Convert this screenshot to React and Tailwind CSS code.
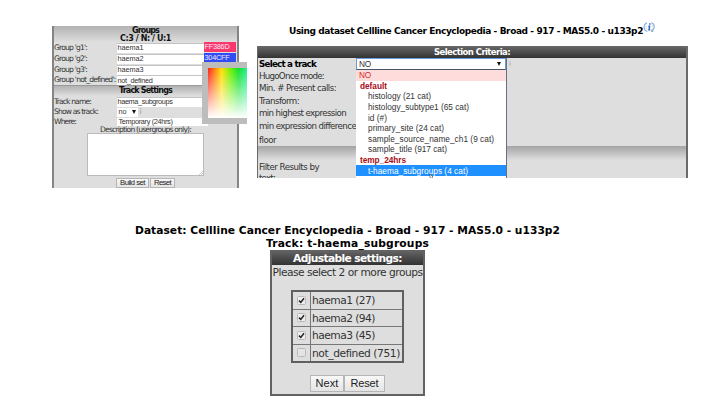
import { useLayoutEffect, useRef } from "react";

const SANS = "font-['DejaVu_Sans',sans-serif]";
const ARIAL = "font-['Liberation_Sans',sans-serif]";

// A single line of text whose tracking is adjusted to fill the given width.
function Fit({ w, className = "", children }) {
  const ref = useRef(null);
  useLayoutEffect(() => {
    const el = ref.current;
    el.style.letterSpacing = "0px";
    const natural = el.getBoundingClientRect().width;
    el.style.letterSpacing = (w - natural) / el.textContent.length + "px";
  }, [w, children]);
  return (
    <span ref={ref} className={`inline-block shrink-0 whitespace-nowrap ${className}`}>
      {children}
    </span>
  );
}

function Field({ label, lw, value, vw, h }) {
  return (
    <div className={`flex items-center ${h}`}>
      <div className="w-[62.5px] shrink-0 flex items-center">
        <Fit w={lw}>{label}</Fit>
      </div>
      <div className={`h-[10px] w-[87px] bg-white border-t border-[#c4c4c4] pl-px flex items-center text-[7.3px] ${ARIAL}`}>
        <Fit w={vw}>{value}</Fit>
      </div>
    </div>
  );
}

function Button({ className, w, children }) {
  return (
    <div className={`flex items-center justify-center border border-[#b5b5b5] bg-linear-to-b from-[#f8f8f8] to-[#e4e4e4] text-[#222] ${ARIAL} ${className}`}>
      <Fit w={w}>{children}</Fit>
    </div>
  );
}

function ColorPicker() {
  return (
    <div className="absolute left-[148px] top-[36px] w-[45px] h-[62px] bg-[#bdbdbd] pl-[6px] pt-[6px]">
      <div className="w-[39px] h-[50px] bg-[linear-gradient(to_right,#ff2018_0%,#ffe000_35%,#62f000_60%,#10df28_78%,#22ee96_100%)]">
        <div className="w-full h-full bg-linear-to-b from-transparent to-white" />
      </div>
    </div>
  );
}

function GroupsPanel() {
  return (
    <section className={`relative w-[187px] h-[162px] bg-[#dedede] border-x-2 border-[#858585] text-[7.6px] leading-[10px] text-[#333] ${SANS}`}>
      <header className="h-[16px] pt-px flex flex-col items-center bg-linear-to-b from-[#b2b2b2] to-[#dedede] font-bold text-[8px] leading-[7.5px] text-[#111]">
        <Fit w={27}>Groups</Fit>
        <Fit w={51}>C:3 / N: / U:1</Fit>
      </header>
      <div className="flex">
        <div>
          <Field h="h-[11px]" label="Group 'g1':" lw={33} value="haema1" vw={26} />
          <Field h="h-[11px]" label="Group 'g2':" lw={33} value="haema2" vw={26} />
          <Field h="h-[11px]" label="Group 'g3':" lw={33} value="haema3" vw={26} />
          <Field h="h-[10px]" label="Group 'not_defined':" lw={61.5} value="not_defined" vw={35} />
        </div>
        <div className={`w-[32px] text-[7.3px] text-[#f4e8f4] ${ARIAL}`}>
          <div className="h-[10px] bg-[#fb386d] pl-px flex items-center"><Fit w={25}>FF386D</Fit></div>
          <div className="h-[10px] mt-px bg-[#304cf4] pl-px flex items-center"><Fit w={25}>304CFF</Fit></div>
        </div>
      </div>
      <header className="h-[11px] flex items-center justify-center border-t border-[#999] bg-linear-to-b from-[#b2b2b2] to-[#dedede] font-bold text-[8px] text-[#111]">
        <Fit w={53}>Track Settings</Fit>
      </header>
      <Field h="h-[11px]" label="Track name:" lw={37} value="haema_subgroups" vw={55} />
      <div className="h-[10px] flex items-center">
        <div className="w-[62.5px] flex items-center"><Fit w={44}>Show as track:</Fit></div>
        <div className={`w-[21px] h-[9px] bg-white pl-[2px] flex items-center gap-[5px] text-[7.3px] text-[#333] ${ARIAL}`}>
          <Fit w={8}>no</Fit>
          <svg className="w-[4px] h-[4px]" viewBox="0 0 4 4"><path d="M0 0h4L2 4z" fill="#111" /></svg>
        </div>
        <span className="ml-[2px] text-[#999]">i</span>
      </div>
      <div className="h-[9px] flex items-center">
        <div className="w-[62.5px] flex items-center"><Fit w={22}>Where:</Fit></div>
        <div className={`w-[91px] h-[8px] bg-white pl-[2px] flex items-center text-[7.3px] ${ARIAL}`}><Fit w={54}>Temporary (24hrs)</Fit></div>
      </div>
      <div className="h-[7px] flex items-center justify-center">
        <Fit w={91}>Description (usergroups only):</Fit>
      </div>
      <div className="ml-[33px] w-[117px] h-[43px] bg-white border border-[#bbb] flex items-end justify-end">
        <svg className="w-[4px] h-[4px]" viewBox="0 0 4 4"><path d="M0 4L4 0M2 4L4 2" stroke="#aaa" strokeWidth=".6" /></svg>
      </div>
      <div className="mt-[2px] pl-[62px] flex gap-px text-[7.7px]">
        <Button className="w-[33px] h-[10px]" w={25}>Build set</Button>
        <Button className="w-[25px] h-[10px]" w={17}>Reset</Button>
      </div>
      <ColorPicker />
    </section>
  );
}

const options = [
  ["histology (21 cat)", 63],
  ["histology_subtype1 (65 cat)", 101],
  ["id (#)", 19],
  ["primary_site (24 cat)", 76],
  ["sample_source_name_ch1 (9 cat)", 126],
  ["sample_title (917 cat)", 79],
];

function TrackDropdown() {
  return (
    <div className={`absolute left-[98px] top-[12px] w-[151px] h-[120px] overflow-hidden bg-white border-r border-[#667080] text-[8.3px] text-[#333] ${ARIAL}`}>
      <div className="h-[12px] border-t border-l border-r border-[#6d9be0] border-b border-b-[#456] pl-[2px] pr-[4px] flex items-center justify-between">
        <Fit w={12}>NO</Fit>
        <svg className="w-[4px] h-[4px]" viewBox="0 0 4 4"><path d="M0 0h4L2 4z" fill="#111" /></svg>
      </div>
      <div className="h-[10.6px] bg-[#ffdcdc] pl-[3px] flex items-center text-[#d92a2a]"><Fit w={12}>NO</Fit></div>
      <div className="h-[10.6px] pl-[4px] flex items-center font-bold text-[#a80d14]"><Fit w={27}>default</Fit></div>
      {options.map(([name, w]) => (
        <div key={name} className="h-[10.6px] pl-[12px] flex items-center"><Fit w={w}>{name}</Fit></div>
      ))}
      <div className="h-[10.6px] pl-[4px] flex items-center font-bold text-[#a80d14]"><Fit w={46}>temp_24hrs</Fit></div>
      <div className="h-[10.6px] pl-[12px] flex items-center bg-[#1e90ff] text-white"><Fit w={100}>t-haema_subgroups (4 cat)</Fit></div>
      <div className="h-[10.6px] pl-[4px] flex items-center font-bold text-[#333]"><Fit w={34}>group_7</Fit></div>
      <svg className="absolute left-[73px] top-[116px] w-[5px] h-[5px]" viewBox="0 0 5 5"><path d="M1 0v5l3-2z" fill="#fff" stroke="#333" strokeWidth=".6" /></svg>
    </div>
  );
}

function CriteriaPanel() {
  return (
    <section className={`relative w-[431px] h-[132px] overflow-hidden bg-[#dedede] border-l border-r-2 border-[#6a6a6a] text-[8.7px] leading-[12px] text-[#333] ${SANS}`}>
      <header className="h-[12px] bg-linear-to-b from-[#6a6a6a] to-[#333] flex items-center justify-center font-bold text-[8.5px] text-white">
        <Fit w={76}>Selection Criteria:</Fit>
      </header>
      <div className="h-[88px] pl-px flex flex-col">
        <div className="h-[12px] flex items-center font-bold text-black"><Fit w={57}>Select a track</Fit></div>
        <div className="h-[12px] flex items-center"><Fit w={65}>HugoOnce mode:</Fit></div>
        <div className="h-[12px] flex items-center"><Fit w={77}>Min. # Present calls:</Fit></div>
        <div className="h-[13px] flex items-center"><Fit w={40}>Transform:</Fit></div>
        <div className="h-[12px] flex items-center"><Fit w={87}>min highest expression</Fit></div>
        <div className="h-[14px] flex items-center"><Fit w={97}>min expression difference</Fit></div>
        <div className="h-[13px] flex items-center"><Fit w={17}>floor</Fit></div>
      </div>
      <div className="h-[32px] pl-px pt-[15px] bg-[linear-gradient(to_bottom,#a4a4a4_0px,#dedede_14px)] leading-[12px]">
        <div className="h-[12px] flex items-center"><Fit w={60}>Filter Results by</Fit></div>
        <div className="h-[11px] -mt-px flex items-center"><Fit w={16}>text:</Fit></div>
      </div>
      <TrackDropdown />
      <div className="absolute left-[251px] top-[12px] text-[#999] text-[7px]">i</div>
    </section>
  );
}

function InfoIcon() {
  return (
    <svg className="w-[13px] h-[12px] -mt-[3px] shrink-0" viewBox="0 0 13 12">
      <path d="M4 .8C-.2 2.4.2 8 4.4 9.4M8.4.8c4.2 1.6 3.6 7-.4 8.4" fill="#e9f2fb" stroke="#8db0dc" strokeWidth="1.1" />
      <path d="M7.6 9.3l2.8 1-.4-2.6" fill="#86a8d4" />
      <path d="M6.8 1.3v1.5M5.4 4.2h1.2L6 7.9h1.3" fill="none" stroke="#2866b5" strokeWidth="1.4" />
    </svg>
  );
}

const groups = [
  ["haema1 (27)", 63, true],
  ["haema2 (94)", 63, true],
  ["haema3 (45)", 63, true],
  ["not_defined (751)", 88, false],
];

function SettingsPanel() {
  return (
    <section className="w-[155px] h-[146px] bg-[#dedede] border-2 border-[#626262] flex flex-col items-center text-[10.7px] text-[#333]">
      <header className="self-stretch h-[13px] bg-linear-to-b from-[#606060] to-[#333] flex items-center justify-center font-bold text-[10.7px] text-white">
        <Fit w={109}>Adjustable settings:</Fit>
      </header>
      <div className="h-[15px] flex items-center"><Fit w={150}>Please select 2 or more groups</Fit></div>
      <div className="mt-[10px] w-[113px] h-[73px] border-2 border-[#606060] flex flex-col divide-y divide-[#777]">
        {groups.map(([name, w, on]) => (
          <div key={name} className="flex-1 flex">
            <div className="w-[18px] border-r border-[#777] flex items-center justify-center">
              <svg className="w-[9px] h-[9px]" viewBox="0 0 9 9">
                <rect x=".5" y=".5" width="8" height="8" rx="1" fill={on ? "#ededed" : "#e4e4e4"} stroke="#b9b9b9" />
                {on && <path d="M2 4.6l1.8 1.8L7 2.3" fill="none" stroke="#222" strokeWidth="1.5" />}
              </svg>
            </div>
            <div className="pl-px pt-px flex items-center"><Fit w={w}>{name}</Fit></div>
          </div>
        ))}
      </div>
      <div className="mt-[12px] flex text-[11px]">
        <Button className="w-[34px] h-[17px]" w={23}>Next</Button>
        <Button className="w-[41px] h-[17px]" w={28}>Reset</Button>
      </div>
    </section>
  );
}

export default function App() {
  return (
    <main className={`w-[720px] h-[416px] overflow-hidden bg-white ${SANS}`}>
      <div className="h-[224px] pl-[52px] flex items-start">
        <div className="pt-[26px]"><GroupsPanel /></div>
        <div className="ml-[18px] pt-[25px]">
          <div className="h-[21px] pl-[32px] flex items-start text-[9px] leading-[12px] font-bold text-black">
            <Fit w={354}>Using dataset Cellline Cancer Encyclopedia - Broad - 917 - MAS5.0 - u133p2</Fit>
            <InfoIcon />
          </div>
          <CriteriaPanel />
        </div>
      </div>
      <div className="w-[695px] flex flex-col items-center text-[10.7px] leading-[13px] font-bold text-black">
        <Fit w={425}>Dataset: Cellline Cancer Encyclopedia - Broad - 917 - MAS5.0 - u133p2</Fit>
        <Fit w={163}>Track: t-haema_subgroups</Fit>
        <div className="font-normal"><SettingsPanel /></div>
      </div>
    </main>
  );
}
